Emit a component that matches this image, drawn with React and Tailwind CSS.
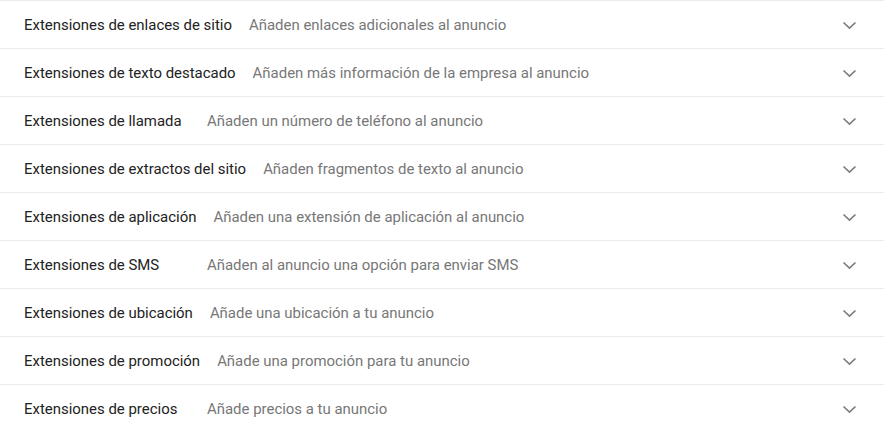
import React from 'react';

const ROWS = [
  ['Extensiones de enlaces de sitio', 'Añaden enlaces adicionales al anuncio'],
  ['Extensiones de texto destacado', 'Añaden más información de la empresa al anuncio'],
  ['Extensiones de llamada', 'Añaden un número de teléfono al anuncio'],
  ['Extensiones de extractos del sitio', 'Añaden fragmentos de texto al anuncio'],
  ['Extensiones de aplicación', 'Añaden una extensión de aplicación al anuncio'],
  ['Extensiones de SMS', 'Añaden al anuncio una opción para enviar SMS'],
  ['Extensiones de ubicación', 'Añade una ubicación a tu anuncio'],
  ['Extensiones de promoción', 'Añade una promoción para tu anuncio'],
  ['Extensiones de precios', 'Añade precios a tu anuncio'],
];

const Chevron = () => (
  <svg width="15" height="9" viewBox="0 0 15 9" className="text-[#7d7d7d]">
    <polyline points="1.5,1.5 7.5,7.2 13.5,1.5" fill="none" stroke="currentColor" strokeWidth="1.7" />
  </svg>
);

const App = () => {
  return (
    <div className="w-[884px] h-[430px] overflow-hidden bg-white font-['Roboto',sans-serif] text-[14.95px]">
      <div className="border-t border-[#ebebeb]">
        {ROWS.map(([title, desc]) => (
          <div key={title} className="h-[48px] flex items-center border-b border-[#ebebeb] pl-6 pr-[27px] pt-[2px]">
            <span className="min-w-[183px] pr-[17px] text-[#222222] whitespace-nowrap">{title}</span>
            <span className="flex-1 text-[#777777] whitespace-nowrap">{desc}</span>
            <Chevron />
          </div>
        ))}
      </div>
    </div>
  );
};

export default App;
